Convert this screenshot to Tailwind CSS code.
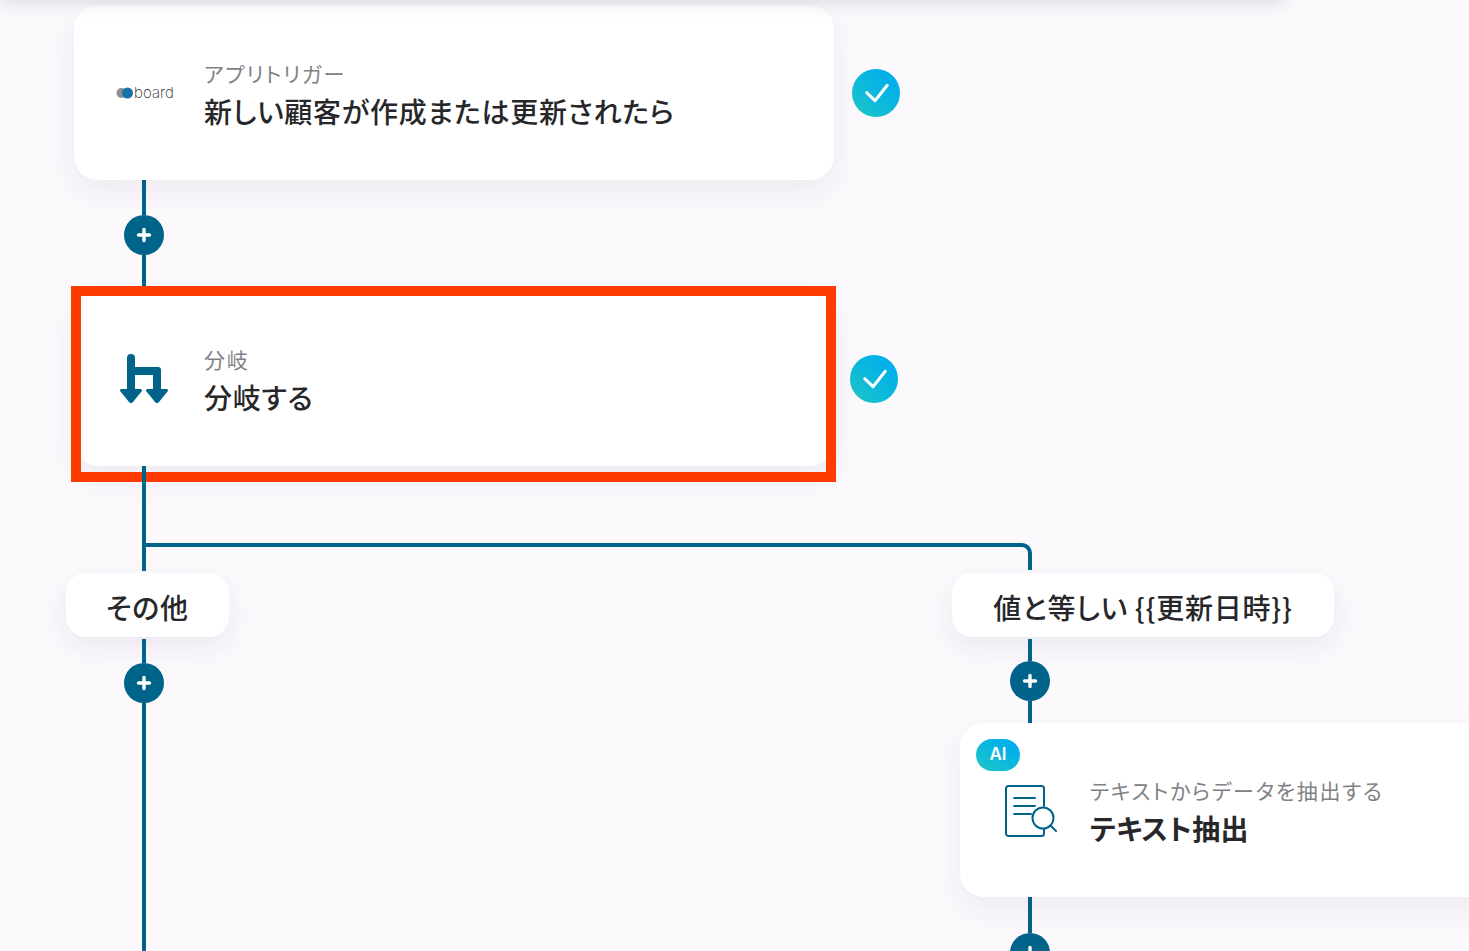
<!DOCTYPE html>
<html lang="ja">
<head>
  <meta charset="UTF-8" />
  <title>フローボット</title>
  <script src="https://cdn.jsdelivr.net/npm/@tailwindcss/browser@4"></script>
</head>
<body class="bg-[#fbf9fc] font-['Noto_Sans_CJK_JP','Noto_Sans',sans-serif] text-[#27272a] [font-feature-settings:'palt']">
  <div class="relative h-[951px] w-[1469px] overflow-hidden pt-[5px] pl-[74px]">
    <div class="absolute top-[-40px] left-0 h-[40px] w-[1285px] bg-white shadow-[0_4px_16px_rgba(30,30,70,0.12)]"></div>

    <!-- trigger -->
    <div class="flex items-center">
      <div class="flex h-[175px] w-[760px] items-center rounded-[24px] bg-white shadow-[0_12px_32px_rgba(40,40,90,0.07)]">
        <div class="flex w-[130px] items-center justify-center pl-[12px]">
          <div class="flex items-center">
            <svg width="18" height="12" viewBox="0 0 18 12">
              <circle cx="5.5" cy="6" r="5" fill="#8b8f94" />
              <circle cx="11.5" cy="6" r="5.500" fill="#1573a8" />
            </svg>
            <span class="font-['Inter'] text-[15px] leading-none font-extralight tracking-[0.1px] text-[#1f1f1f]">board</span>
          </div>
        </div>
        <div class="pt-[3px]">
          <p class="text-[21px] leading-[30px] font-normal tracking-[1.7px] text-[#818185]">アプリトリガー</p>
          <p class="mt-[3px] text-[28px] leading-[40px] font-medium tracking-[0.75px]">新しい顧客が作成または更新されたら</p>
        </div>
      </div>
      <div class="ml-[18px] flex h-12 w-12 items-center justify-center rounded-full bg-linear-to-tr from-[#1fc6c4] to-[#00a9f4]">
        <svg width="48" height="48" viewBox="0 0 48 48" fill="none" stroke="white" stroke-width="3" stroke-linecap="round" stroke-linejoin="round"><path d="M14.700 23.700 23 31.700 35.300 16.300" /></svg>
      </div>
    </div>

    <!-- add step -->
    <div class="ml-[50px] flex w-10 flex-col items-center">
      <div class="h-[35px] w-1 bg-[#00638a]"></div>
      <div class="flex h-10 w-10 items-center justify-center rounded-full bg-[#00638a]">
        <svg width="16" height="16" viewBox="0 0 16 16" stroke="white" stroke-width="3.4" stroke-linecap="round"><path d="M8 2.500v11M2.500 8h11" /></svg>
      </div>
      <div class="h-[36px] w-1 bg-[#00638a]"></div>
    </div>

    <!-- branch -->
    <div class="flex">
      <div class="relative flex h-[175px] w-[760px] items-center rounded-[24px] bg-white shadow-[0_12px_32px_rgba(40,40,90,0.07)]">
        <div class="flex w-[130px] items-center justify-center pl-[10px]">
          <svg width="48" height="49" viewBox="0 0 48 49" fill="#00638a">
            <path d="M7 4a4 4 0 0 1 8 0v9h23a3 3 0 0 1 3 3v20h-8V21H15v15H7z" />
            <path d="M1.500 35h19a1.500 1.500 0 0 1 1 2.600l-8.500 10.500a2.500 2.500 0 0 1-4 0L.5 37.600a1.500 1.500 0 0 1 1-2.600z" />
            <path d="M27.500 35h19a1.500 1.500 0 0 1 1 2.600l-8.500 10.500a2.500 2.500 0 0 1-4 0l-8.500-10.500a1.500 1.500 0 0 1 1-2.600z" />
          </svg>
        </div>
        <div class="pt-[3px]">
          <p class="text-[21px] leading-[30px] font-normal tracking-[1.7px] text-[#818185]">分岐</p>
          <p class="mt-[3px] text-[28px] leading-[40px] font-medium tracking-[0.75px]">分岐する</p>
        </div>
        <div class="absolute top-[-5px] left-[-3px] h-[196px] w-[765px] border-[10px] border-[#ff3c00]"></div>
      </div>
      <div class="mt-[64px] ml-[16px] flex h-12 w-12 items-center justify-center rounded-full bg-linear-to-tr from-[#1fc6c4] to-[#00a9f4]">
        <svg width="48" height="48" viewBox="0 0 48 48" fill="none" stroke="white" stroke-width="3" stroke-linecap="round" stroke-linejoin="round"><path d="M14.700 23.700 23 31.700 35.300 16.300" /></svg>
      </div>
    </div>

    <div class="relative flex">
      <!-- connector to right branch -->
      <div class="absolute top-[77px] left-[72px] h-[27px] w-[886px] rounded-tr-[10px] border-t-4 border-r-4 border-[#00638a]"></div>

      <div class="w-[878px] shrink-0">
        <div class="ml-[68px] h-[105px] w-1 bg-[#00638a]"></div>
        <div class="mt-[2px] ml-[-8px] flex h-16 w-[163px] items-center justify-center rounded-[20px] bg-white pt-[4px] text-[28px] font-medium tracking-[0.75px] shadow-[0_10px_28px_rgba(40,40,90,0.08)]">その他</div>
        <div class="ml-[50px] flex w-10 flex-col items-center pt-[2px]">
          <div class="h-[24px] w-1 bg-[#00638a]"></div>
          <div class="flex h-10 w-10 items-center justify-center rounded-full bg-[#00638a]">
            <svg width="16" height="16" viewBox="0 0 16 16" stroke="white" stroke-width="3.4" stroke-linecap="round"><path d="M8 2.500v11M2.500 8h11" /></svg>
          </div>
          <div class="h-[260px] w-1 bg-[#00638a]"></div>
        </div>
      </div>

      <div class="w-[600px] shrink-0 pt-[107px]">
        <div class="flex h-16 w-[382px] items-center justify-center rounded-[20px] bg-white pt-[4px] text-[28px] font-medium tracking-[0.75px] shadow-[0_10px_28px_rgba(40,40,90,0.08)]">値と等しい {{更新日時}}</div>
        <div class="ml-[58px] flex w-10 flex-col items-center pt-[2px]">
          <div class="h-[22px] w-1 bg-[#00638a]"></div>
          <div class="flex h-10 w-10 items-center justify-center rounded-full bg-[#00638a]">
            <svg width="16" height="16" viewBox="0 0 16 16" stroke="white" stroke-width="3.4" stroke-linecap="round"><path d="M8 2.500v11M2.500 8h11" /></svg>
          </div>
          <div class="h-[22px] w-1 bg-[#00638a]"></div>
        </div>
        <div class="relative ml-2 flex h-[174px] w-[600px] items-center rounded-l-[24px] bg-white shadow-[0_12px_32px_rgba(40,40,90,0.07)]">
          <span class="absolute top-4 left-4 flex h-8 w-11 items-center justify-center rounded-full bg-linear-to-tr from-[#1fc6c4] to-[#00a9f4] font-['Inter'] text-[17px] font-semibold text-white">AI</span>
          <div class="flex w-[130px] items-center justify-center pl-[11px]">
            <svg width="52" height="52" viewBox="0 0 52 52" fill="none" stroke="#00638a" stroke-width="2" stroke-linecap="round" stroke-linejoin="round" class="mt-[2px]">
              <path d="M39 21V3.500A2.500 2.500 0 0 0 36.500 1h-33A2.500 2.500 0 0 0 1 3.500v45A2.500 2.500 0 0 0 3.500 51h33a2.500 2.500 0 0 0 2.500-2.500V44" />
              <path d="M9 13h21M9 21h21M9 29h17" />
              <circle cx="38" cy="33" r="10.500" />
              <path d="M45.500 40.500 51 46" />
            </svg>
          </div>
          <div class="pt-[3px]">
            <p class="text-[21px] leading-[30px] font-normal tracking-[1.7px] text-[#818185]">テキストからデータを抽出する</p>
            <p class="mt-[3px] text-[28px] leading-[40px] font-semibold tracking-[0.4px]">テキスト抽出</p>
          </div>
        </div>
        <div class="ml-[58px] flex w-10 flex-col items-center">
          <div class="h-[36px] w-1 bg-[#00638a]"></div>
          <div class="flex h-10 w-10 shrink-0 items-center justify-center rounded-full bg-[#00638a]">
            <svg width="16" height="16" viewBox="0 0 16 16" stroke="white" stroke-width="3.4" stroke-linecap="round"><path d="M8 2.500v11M2.500 8h11" /></svg>
          </div>
        </div>
      </div>
    </div>
  </div>
</body>
</html>
